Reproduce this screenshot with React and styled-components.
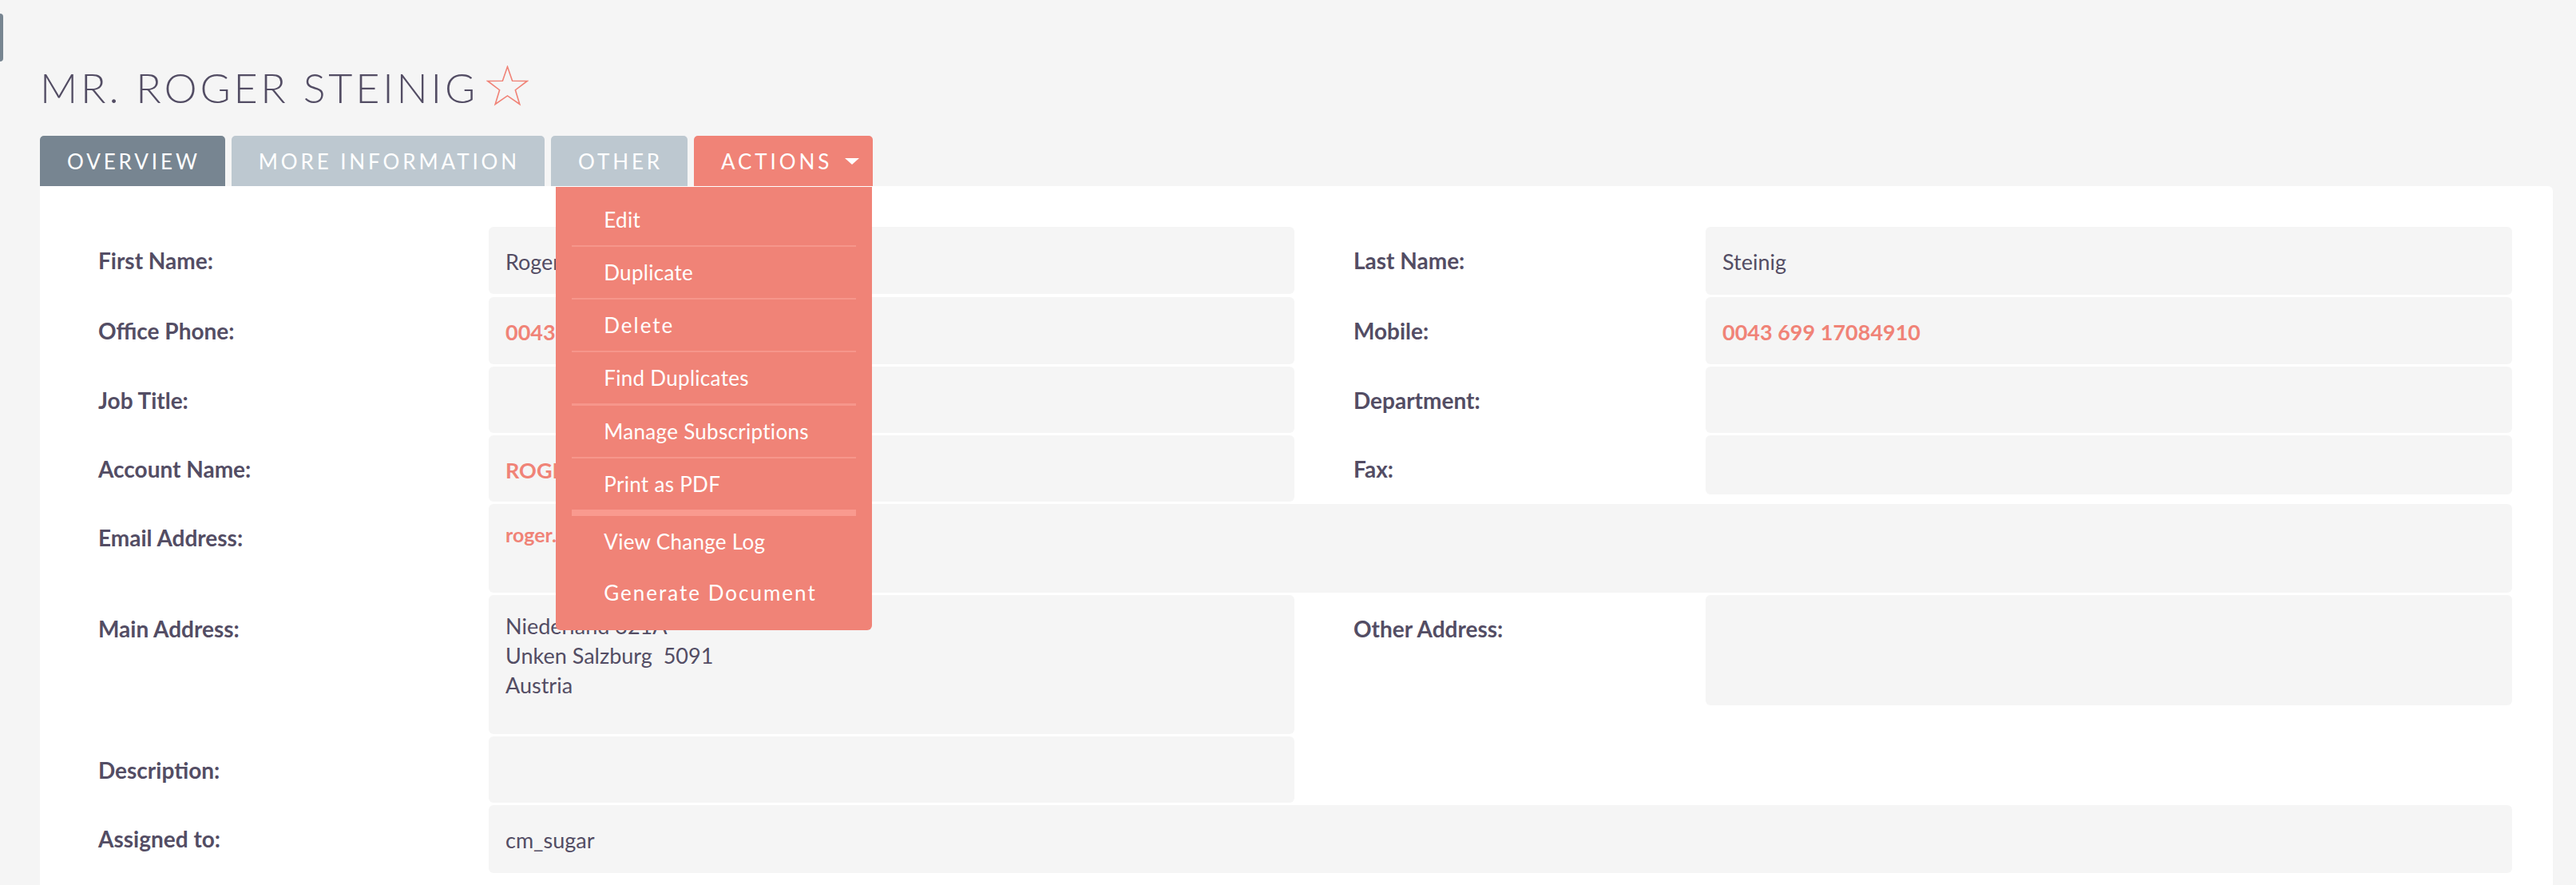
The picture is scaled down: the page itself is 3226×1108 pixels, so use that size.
import React from 'react';
import styled, { createGlobalStyle } from 'styled-components';

const GlobalStyle = createGlobalStyle`
  html, body {
    margin: 0;
    padding: 0;
    background: #f5f5f5;
    font-family: Lato, "Open Sans", "Noto Sans", sans-serif;
    color: #534d64;
  }
  * { box-sizing: border-box; }
`;

const Page = styled.div`
  min-height: 100vh;
  padding-top: 78px;
  overflow: hidden;
`;

const SideHandle = styled.div`
  position: fixed;
  left: 0;
  top: 17px;
  width: 4px;
  height: 60px;
  background: #778591;
  border-radius: 0 4px 4px 0;
`;

const Header = styled.div`
  display: flex;
  align-items: center;
  padding-left: 50px;
`;

const Title = styled.h1`
  margin: 0;
  font-size: 52px;
  font-weight: 300;
  line-height: 62px;
  letter-spacing: 3.8px;
  text-transform: uppercase;
  color: #534d64;
`;

const Star = styled.svg`
  width: 53px;
  height: 51px;
  margin-left: 10px;
  margin-top: -4px;
`;

const TabBar = styled.div`
  display: flex;
  gap: 8px;
  margin-top: 30px;
  padding-left: 50px;
`;

const TabWrap = styled.div`
  position: relative;
`;

const tabColors = {
  active: '#778591',
  idle: '#bdc8d0',
  actions: '#f08377',
};

const Tab = styled.div`
  display: flex;
  align-items: center;
  height: 63px;
  padding: 0 ${p => (p.$variant === 'actions' ? 17 : 31)}px 0 34px;
  background: ${p => tabColors[p.$variant]};
  color: #fff;
  font-size: 26px;
  letter-spacing: 3.9px;
  text-transform: uppercase;
  border-radius: 5px 5px 0 0;
  white-space: nowrap;
`;

const Caret = styled.span`
  width: 0;
  height: 0;
  margin-left: 16px;
  border-left: 9px solid transparent;
  border-right: 9px solid transparent;
  border-top: 8px solid #fff;
`;

const Menu = styled.div`
  position: absolute;
  top: calc(100% + 1px);
  right: 1px;
  width: 396px;
  padding: 9px 20px 15px;
  background: #f08377;
  border-radius: 0 0 6px 6px;
  z-index: 10;
`;

const MenuItem = styled.div`
  height: ${p => 64 + (p.$sep || 0)}px;
  line-height: 64px;
  padding-left: 40px;
  font-size: 26px;
  color: #fff;
  letter-spacing: ${p => (p.$spaced ? '2px' : '0.3px')};
  border-bottom: ${p => p.$sep || 0}px solid ${p => (p.$sep > 4 ? '#f99a8f' : '#f6968b')};
  white-space: nowrap;
`;

const Panel = styled.div`
  display: flex;
  flex-direction: column;
  gap: 3px;
  margin: 0 29px 0 50px;
  padding: 51px 51px 40px 73px;
  background: #fff;
  border-radius: 0 6px 0 0;
`;

const FieldRow = styled.div`
  display: grid;
  grid-template-columns: 489px 1009px 515px 1fr;
  align-items: start;
`;

const Label = styled.div`
  padding-top: 24px;
  padding-left: ${p => (p.$right ? 74 : 0)}px;
  font-size: 28px;
  font-weight: 700;
  line-height: 37px;
  color: #534d64;
`;

const Value = styled.div`
  grid-column: ${p => (p.$wide ? 'span 3' : 'auto')};
  min-height: ${p => p.$h}px;
  padding: ${p => p.$pt ?? 25}px 21px 0;
  background: #f5f5f5;
  border-radius: 6px;
  font-size: 27px;
  line-height: 37px;
  color: #534d64;
  white-space: nowrap;
  overflow: hidden;
`;

const Link = styled.a`
  color: #f08377;
  font-weight: 700;
  font-size: ${p => p.$size || 27}px;
  text-decoration: none;
`;

const Empty = styled.div``;

const menuItems = [
  { text: 'Edit', sep: 2 },
  { text: 'Duplicate', sep: 2 },
  { text: 'Delete', sep: 2, spaced: true },
  { text: 'Find Duplicates', sep: 3 },
  { text: 'Manage Subscriptions', sep: 2 },
  { text: 'Print as PDF', sep: 8 },
  { text: 'View Change Log' },
  { text: 'Generate Document', spaced: true },
];

const StarIcon = () => (
  <Star viewBox="0 0 53 51">
    <polygon
      points="26.5,1.5 32.6,19.2 51.2,19.5 36.4,30.7 41.8,48.5 26.5,37.9 11.2,48.5 16.6,30.7 1.8,19.5 20.4,19.2"
      fill="none"
      stroke="#f08377"
      strokeWidth="1.6"
      strokeLinejoin="miter"
    />
  </Star>
);

const App = () => {
  return (
    <Page>
      <GlobalStyle />
      <SideHandle />

      <Header>
        <Title>Mr. Roger Steinig</Title>
        <StarIcon />
      </Header>

      <TabBar>
        <Tab $variant="active">Overview</Tab>
        <Tab $variant="idle">More Information</Tab>
        <Tab $variant="idle">Other</Tab>
        <TabWrap>
          <Tab $variant="actions">
            Actions
            <Caret />
          </Tab>
          <Menu>
            {menuItems.map(item => (
              <MenuItem key={item.text} $sep={item.sep} $spaced={item.spaced}>
                {item.text}
              </MenuItem>
            ))}
          </Menu>
        </TabWrap>
      </TabBar>

      <Panel>
        <FieldRow>
          <Label>First Name:</Label>
          <Value $h={84}>Roger</Value>
          <Label $right>Last Name:</Label>
          <Value $h={85}>Steinig</Value>
        </FieldRow>

        <FieldRow>
          <Label>Office Phone:</Label>
          <Value $h={84}><Link>0043 6582 8237</Link></Value>
          <Label $right>Mobile:</Label>
          <Value $h={84}><Link>0043 699 17084910</Link></Value>
        </FieldRow>

        <FieldRow>
          <Label>Job Title:</Label>
          <Value $h={83} />
          <Label $right>Department:</Label>
          <Value $h={83} />
        </FieldRow>

        <FieldRow>
          <Label>Account Name:</Label>
          <Value $h={83}><Link>ROGER STEINIG GMBH</Link></Value>
          <Label $right>Fax:</Label>
          <Value $h={74} />
        </FieldRow>

        <FieldRow>
          <Label>Email Address:</Label>
          <Value $wide $h={111} $pt={19}>
            <Link $size={25}>roger.steinig@steinig.at</Link>
          </Value>
        </FieldRow>

        <FieldRow>
          <Label>Main Address:</Label>
          <Value $h={174} $pt={20}>
            Niederland 321A<br />
            Unken Salzburg&nbsp;&nbsp;5091<br />
            Austria
          </Value>
          <Label $right>Other Address:</Label>
          <Value $h={138} />
        </FieldRow>

        <FieldRow>
          <Label>Description:</Label>
          <Value $h={83} />
          <Empty />
          <Empty />
        </FieldRow>

        <FieldRow>
          <Label>Assigned to:</Label>
          <Value $wide $h={85}>cm_sugar</Value>
        </FieldRow>
      </Panel>
    </Page>
  );
};

export default App;
